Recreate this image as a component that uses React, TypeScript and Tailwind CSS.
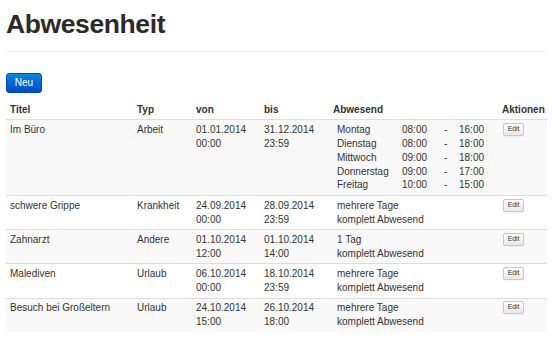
const rows = [
  {
    title: "Im Büro",
    type: "Arbeit",
    from: ["01.01.2014", "00:00"],
    to: ["31.12.2014", "23:59"],
    days: [
      ["Montag", "08:00", "16:00"],
      ["Dienstag", "08:00", "18:00"],
      ["Mittwoch", "09:00", "18:00"],
      ["Donnerstag", "09:00", "17:00"],
      ["Freitag", "10:00", "15:00"],
    ],
  },
  { title: "schwere Grippe", type: "Krankheit", from: ["24.09.2014", "00:00"], to: ["28.09.2014", "23:59"], span: "mehrere Tage" },
  { title: "Zahnarzt", type: "Andere", from: ["01.10.2014", "12:00"], to: ["01.10.2014", "14:00"], span: "1 Tag" },
  { title: "Malediven", type: "Urlaub", from: ["06.10.2014", "00:00"], to: ["18.10.2014", "23:59"], span: "mehrere Tage" },
  { title: "Besuch bei Großeltern", type: "Urlaub", from: ["24.10.2014", "15:00"], to: ["26.10.2014", "18:00"], span: "mehrere Tage" },
];

type Row = (typeof rows)[number] & { days?: string[][]; span?: string };

const cell = "px-[4px] pt-[2.8px] pb-[2.8px] align-top text-left";

export default function App() {
  return (
    <div className="min-h-[350px] bg-white px-[6px] text-[10px] leading-[13.8px] text-[#333] [font-family:'Liberation_Sans',Arial,sans-serif]">
      <h1 className="pt-[10px] text-[26.5px] font-bold leading-[29px] tracking-[-0.4px] text-[#2a2a2a]">Abwesenheit</h1>
      <hr className="mt-[12px] border-0 border-t border-[#eee]" />
      <button className="mt-[21px] h-[20px] w-[36px] rounded-[3px] border border-[#0048c4] bg-gradient-to-b from-[#0a88de] to-[#0046cc] text-[10px] leading-none text-white">
        Neu
      </button>
      <table className="mt-[7px] w-[541px] table-fixed border-collapse">
        <colgroup>
          <col className="w-[127px]" />
          <col className="w-[59px]" />
          <col className="w-[68px]" />
          <col className="w-[69px]" />
          <col className="w-[169px]" />
          <col className="w-[49px]" />
        </colgroup>
        <thead>
          <tr className="font-bold">
            <th className={cell}>Titel</th>
            <th className={cell}>Typ</th>
            <th className={cell}>von</th>
            <th className={cell}>bis</th>
            <th className={cell}>Abwesend</th>
            <th className={cell}>Aktionen</th>
          </tr>
        </thead>
        <tbody>
          {(rows as Row[]).map((r, i) => (
            <tr key={r.title} className={`border-t border-[#ddd] ${i % 2 === 0 ? "bg-[#f9f9f9]" : "bg-white"}`}>
              <td className={cell}>{r.title}</td>
              <td className={cell}>{r.type}</td>
              <td className={cell}>
                {r.from[0]}
                <br />
                {r.from[1]}
              </td>
              <td className={cell}>
                {r.to[0]}
                <br />
                {r.to[1]}
              </td>
              <td className={`${cell} pl-[8px]`}>
                {r.days ? (
                  <div className="grid grid-cols-[65px_42px_15px_auto]">
                    {r.days.map(([day, start, end]) => (
                      <div key={day} className="contents">
                        <span>{day}</span>
                        <span>{start}</span>
                        <span>-</span>
                        <span>{end}</span>
                      </div>
                    ))}
                  </div>
                ) : (
                  <>
                    {r.span}
                    <br />
                    komplett Abwesend
                  </>
                )}
              </td>
              <td className={`${cell} pl-[5px]`}>
                <button className="block h-[13px] w-[21px] rounded-[2px] border border-[#c8c8c8] bg-gradient-to-b from-white to-[#e8e8e8] text-[6.8px] leading-none text-[#333] shadow-[0_1px_1px_rgba(0,0,0,0.05)]">
                  Edit
                </button>
              </td>
            </tr>
          ))}
        </tbody>
      </table>
    </div>
  );
}
